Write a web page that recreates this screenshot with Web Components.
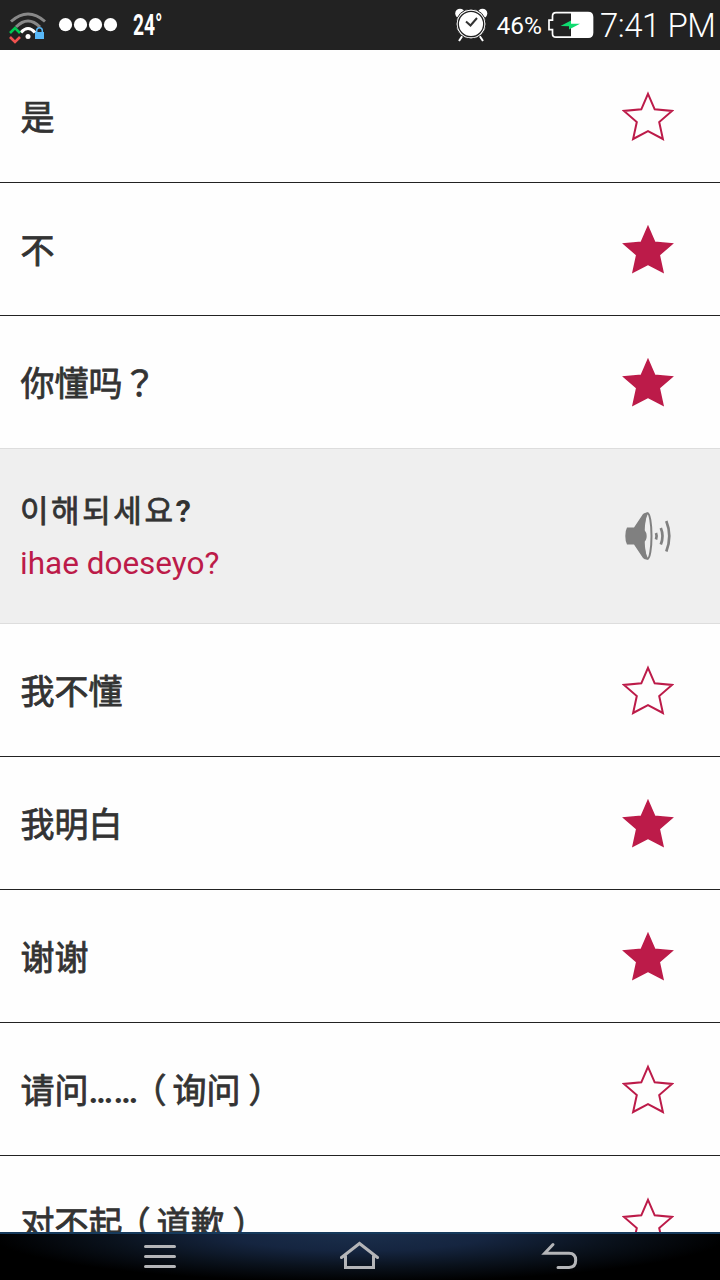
<!DOCTYPE html>
<html lang="zh-CN">
<head>
<meta charset="utf-8">
<title>Phrasebook</title>
<style>
html, body {
  margin: 0;
  height: 100%;
  overflow: hidden;
}
</style>
</head>
<body>
<phrase-app>
  <phrase-row>是</phrase-row>
  <phrase-row starred>不</phrase-row>
  <phrase-row starred open>你懂吗<span lang="zh-TW">？</span></phrase-row>
  <phrase-translation>이해되세요<b>?</b><span slot="reading">ihae doeseyo?</span></phrase-translation>
  <phrase-row>我不懂</phrase-row>
  <phrase-row starred>我明白</phrase-row>
  <phrase-row starred>谢谢</phrase-row>
  <phrase-row>请问<b>……</b><i>（</i>询问<i class="close">）</i></phrase-row>
  <phrase-row>对不起<i>（</i>道歉<i class="close">）</i></phrase-row>
</phrase-app>

<script>
function attach(el, html) {
  const template = document.createElement('template');
  template.innerHTML = html;
  const root = el.attachShadow({ mode: 'open' });
  root.appendChild(template.content.cloneNode(true));
  return root;
}

class StatusBar extends HTMLElement {
  constructor() {
    super();
    attach(this, `
<style>
:host {
  display: flex;
  align-items: center;
  flex: none;
  box-sizing: border-box;
  height: 50px;
  padding: 0 5px 0 8px;
  background: #222;
  color: #fff;
  font-family: Roboto, "Noto Sans", sans-serif;
  white-space: nowrap;
}
svg { display: block; flex: none; }
.temp {
  width: 38px;
  margin-left: 14px;
  font: 700 30px/50px Roboto, sans-serif;
}
.temp span { display: inline-block; transform: scaleX(.64); transform-origin: 0 50%; }
.alarm { margin: 0 9px 0 auto; }
.battery { font-size: 24.500px; line-height: 50px; padding-top: 2px; }
.cell { margin-left: 6px; }
.clock {
  width: 115px;
  margin-left: 6px;
  padding-top: 2px;
  font-size: 33px;
  font-weight: 300;
  line-height: 50px;
  letter-spacing: -.5px;
}
</style>
<svg width="40" height="50" viewBox="8 0 40 50" fill="none">
  <path d="M11 21.500Q28 6.500 45 21.500" stroke="#888" stroke-width="3"/>
  <path d="M16 27Q28 15 40 27" stroke="#888" stroke-width="3"/>
  <path d="M21 32.500Q28 24.500 35 32.500" stroke="#fff" stroke-width="3.200"/>
  <circle cx="28" cy="36.500" r="2.500" fill="#fff"/>
  <path d="M10 33l5-5 5 5" stroke="#00c853" stroke-width="2.600"/>
  <path d="M10 37l5 5 5-5" stroke="#f0524f" stroke-width="2.600"/>
  <path d="M35 32h9v7h-9z" fill="#58b8f8"/>
  <path d="M36.700 33v-2.500a2.800 2.800 0 0 1 5.600 0V33" stroke="#58b8f8" stroke-width="1.500"/>
</svg>
<svg width="71" height="50" viewBox="48 0 71 50" fill="#fff">
  <circle cx="65.500" cy="24.700" r="6.600"/><circle cx="80.500" cy="24.700" r="6.600"/>
  <circle cx="95.500" cy="24.700" r="6.600"/><circle cx="110.500" cy="24.700" r="6.600"/>
</svg>
<div class="temp"><span>24°</span></div>
<svg class="alarm" width="34" height="50" viewBox="454 0 34 50">
  <circle cx="460" cy="13.500" r="4.800" fill="#fff"/><circle cx="482.500" cy="13.500" r="4.800" fill="#fff"/>
  <path d="M463 35l-4 6M479 35l4 6" stroke="#fff" stroke-width="2"/>
  <circle cx="471" cy="24" r="15" fill="#fff" stroke="#222" stroke-width="1"/>
  <circle cx="471" cy="24" r="12.700" fill="none" stroke="#222" stroke-width="1.300"/>
  <path d="M466 21.500l4.500 4 6.500-7.500" fill="none" stroke="#333" stroke-width="2"/>
</svg>
<div class="battery">46%</div>
<svg class="cell" width="46" height="50" viewBox="548 0 46 50">
  <path d="M571 12.500h17q4.500 0 4.500 4.500v16q0 4.500-4.500 4.500h-17z" fill="#fff"/>
  <path d="M588 12.700H556q-3.500 0-3.500 3.500v4h-3.500v9.500h3.500v4q0 3.500 3.500 3.500h32q4.500 0 4.500-4.500V17q0-4.300-4.500-4.300z" fill="none" stroke="#fff" stroke-width="1.700"/>
  <path d="M560.500 26l10.500-5.500v3.300h9L569 29.500v-3.300z" fill="#0fdc70"/>
</svg>
<div class="clock">7:41 PM</div>`);
  }
}
customElements.define('status-bar', StatusBar);

class StarToggle extends HTMLElement {
  constructor() {
    super();
    attach(this, `
<style>
:host { display: block; width: 52px; height: 50px; }
svg { display: block; }
path { fill: none; stroke: #bc1b49; stroke-width: 2; }
:host([on]) path { fill: #bc1b49; stroke-width: 1.6; }
</style>
<svg width="52" height="50" viewBox="0 0 52 50">
  <path d="M26 2.800L32.700 18.300 50 19.900 37.200 31 40.900 48 26 40.200 11.100 48 14.800 31 2 19.900 19.300 18.300z"/>
</svg>`);
  }
}
customElements.define('star-toggle', StarToggle);

class PhraseRow extends HTMLElement {
  static get observedAttributes() {
    return ['starred'];
  }

  constructor() {
    super();
    this.root = attach(this, `
<style>
:host {
  display: flex;
  align-items: center;
  justify-content: space-between;
  flex: none;
  box-sizing: border-box;
  height: 133px;
  padding: 0 46px 0 20.500px;
  border-bottom: 1px solid #222;
  background: #fefefe;
  color: #333;
  font: 400 34px/50px "Noto Sans CJK SC", sans-serif;
  -webkit-text-stroke: .8px #333;
}
:host([open]) { border-bottom-color: #ddd; }
.text { white-space: nowrap; }
::slotted(span) { font-family: "Noto Sans CJK TC", sans-serif; }
::slotted(b) {
  font-family: Roboto, sans-serif;
  font-size: 33px;
  line-height: 0;
  letter-spacing: .5px;
  -webkit-text-stroke: 0;
}
/* half-width bracket glyphs, centred in a full-width cell */
::slotted(i) {
  margin: 0 6px 0 11px;
  font-style: normal;
  font-feature-settings: "halt";
}
::slotted(i.close) { margin: 0 9px 0 8px; }
</style>
<div class="text"><slot></slot></div>
<star-toggle></star-toggle>`);
  }

  attributeChangedCallback() {
    this.root.querySelector('star-toggle').toggleAttribute('on', this.hasAttribute('starred'));
  }
}
customElements.define('phrase-row', PhraseRow);

class PhraseTranslation extends HTMLElement {
  constructor() {
    super();
    attach(this, `
<style>
:host {
  display: flex;
  align-items: center;
  justify-content: space-between;
  flex: none;
  box-sizing: border-box;
  height: 175px;
  padding: 0 46px 0 20px;
  border-bottom: 1px solid #ddd;
  background: #efefef;
  color: #333;
}
.phrase {
  font: 400 31px/55px "Noto Sans CJK KR", sans-serif;
  letter-spacing: 2.600px;
  -webkit-text-stroke: .8px #333;
}
.reading {
  color: #bc1b49;
  font: 400 31.500px/55px Roboto, sans-serif;
}
::slotted(b) {
  font-family: Roboto, sans-serif;
  line-height: 0;
  letter-spacing: 0;
  -webkit-text-stroke: 0;
}
</style>
<div>
  <div class="phrase"><slot></slot></div>
  <div class="reading"><slot name="reading"></slot></div>
</div>
<svg width="52" height="52" viewBox="622 510 52 52" fill="none" stroke="#808080">
  <path d="M627 527.500h7L643 514q1.500-1.500 4-1.500h1.500q-4.500 8-4.500 23.500t4.500 23.500H647q-2.500 0-4-1.500l-9-13.500h-7q-1.700-3-1.700-8.500t1.700-8.500z" fill="#808080" stroke="none"/>
  <path d="M643 529.500q3.700 1.500 3.700 6.500t-3.700 6.500z" fill="#808080" stroke="none"/>
  <ellipse cx="647.500" cy="536" rx="4" ry="22.700" stroke-width="2"/>
  <path d="M656 533q1.300 3 0 6.500M660.800 528q3.400 8 0 16.500M666.300 521q6 15 0 30.500" stroke-width="2.700"/>
</svg>`);
  }
}
customElements.define('phrase-translation', PhraseTranslation);

class NavBar extends HTMLElement {
  constructor() {
    super();
    attach(this, `
<style>
:host {
  display: flex;
  flex: none;
  justify-content: center;
  gap: 160px;
  box-sizing: border-box;
  height: 48px;
  border-top: 2px solid #163a5c;
  background: radial-gradient(ellipse 370px 48px at 50% 0, #1a2e4b 0%, #152540 35%, #0a121d 68%, #000 100%);
}
svg { display: block; fill: none; stroke: #b4b5b8; stroke-width: 3; stroke-linecap: round; }
</style>
<svg width="40" height="46" viewBox="140 1234 40 46"><path d="M145.500 1246.500h29M145.500 1256.500h29M145.500 1266.500h29"/></svg>
<svg width="40" height="46" viewBox="340 1234 40 46"><path d="M341.500 1257.500l18-14 18 14M345.500 1256v11.500h28V1256"/></svg>
<svg width="40" height="46" viewBox="540 1234 40 46"><path d="M553 1244.500l-8.300 8.700H569q6.700 0 6.700 7t-6.700 7.300h-11"/></svg>`);
  }
}
customElements.define('nav-bar', NavBar);

class PhraseApp extends HTMLElement {
  constructor() {
    super();
    attach(this, `
<style>
:host {
  display: flex;
  flex-direction: column;
  height: 100vh;
  overflow: hidden;
}
.list {
  display: flex;
  flex-direction: column;
  flex: 1;
  min-height: 0;
  overflow: hidden;
  background: #fefefe;
}
</style>
<status-bar></status-bar>
<div class="list"><slot></slot></div>
<nav-bar></nav-bar>`);
  }
}
customElements.define('phrase-app', PhraseApp);
</script>
</body>
</html>
